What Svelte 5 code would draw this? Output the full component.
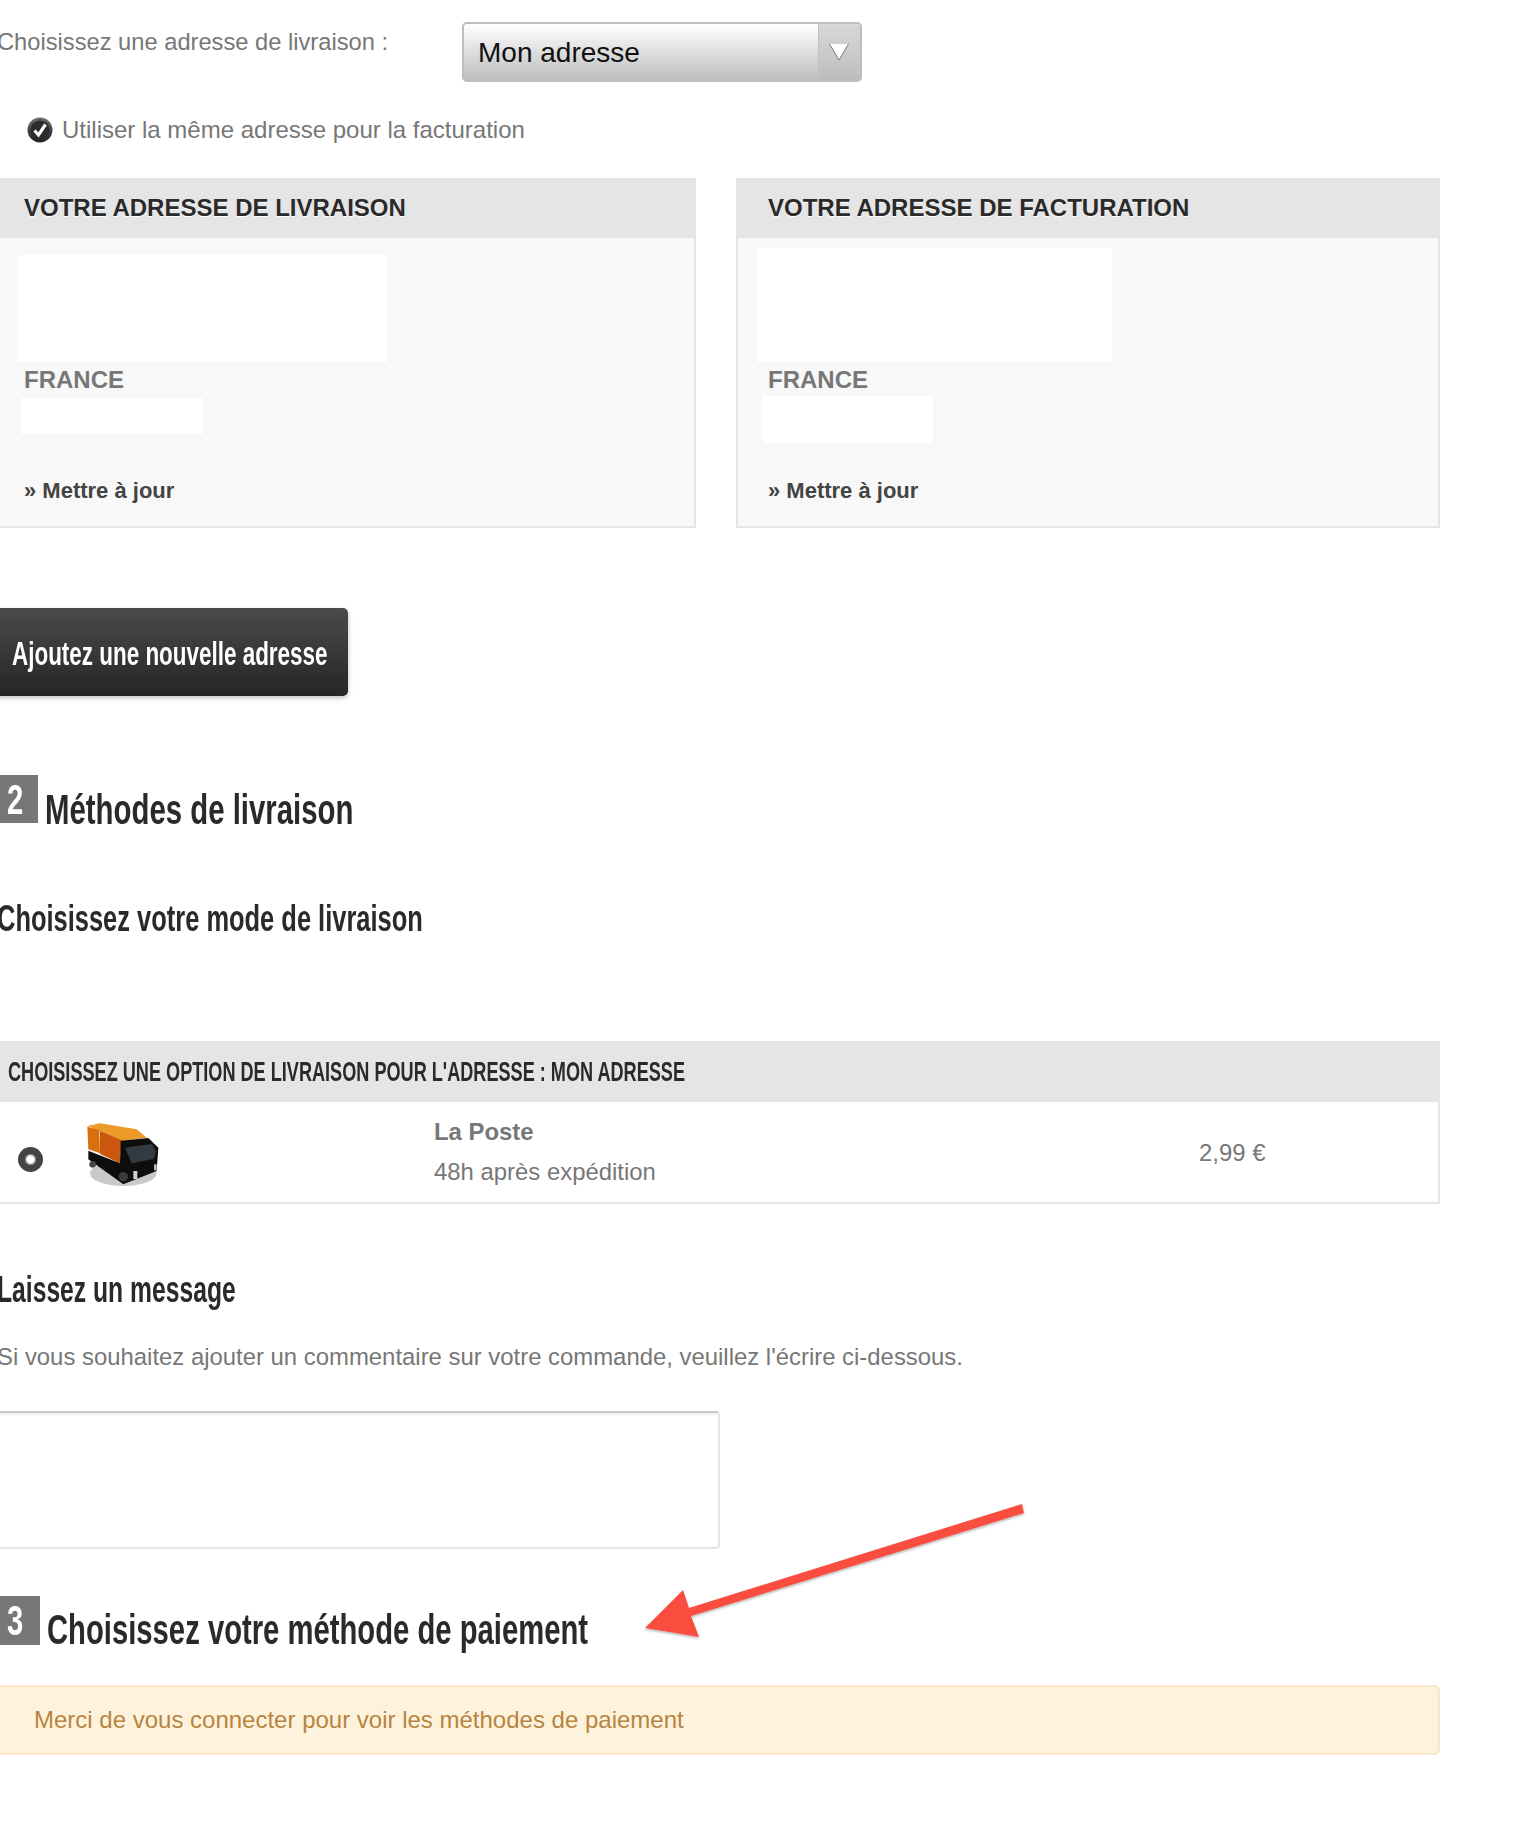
<script>
  const addresses = [
    { title: 'VOTRE ADRESSE DE LIVRAISON', cls: 'left' },
    { title: 'VOTRE ADRESSE DE FACTURATION', cls: 'right' }
  ];
</script>

<div class="page">
  <div class="choose">
    <span class="choose-label">Choisissez une adresse de livraison :</span>
    <div class="select">
      <span class="select-value">Mon adresse</span>
      <span class="select-arrow">
        <svg width="20" height="18" viewBox="0 0 20 18">
          <path d="M0.5 1 H19.5 L10 17 Z" fill="#fff" />
          <path d="M0.5 1 L10 17 L19.5 1" fill="none" stroke="#777" stroke-width="1" />
        </svg>
      </span>
    </div>
  </div>

  <div class="same">
    <svg width="26" height="26" viewBox="0 0 26 26">
      <defs>
        <linearGradient id="check-rim" x1="0" y1="0" x2="0" y2="1">
          <stop offset="0" stop-color="#6a6a6a" />
          <stop offset="1" stop-color="#222" />
        </linearGradient>
      </defs>
      <circle cx="13" cy="13" r="12.5" fill="url(#check-rim)" />
      <circle cx="13" cy="13" r="9.5" fill="#2c2c2c" />
      <path d="M7.5 13.5 L11.5 18 L18.5 7.5" fill="none" stroke="#fff" stroke-width="3.2" />
    </svg>
    <span>Utiliser la même adresse pour la facturation</span>
  </div>

  <div class="addresses">
    {#each addresses as a}
      <div class="address {a.cls}">
        <h3>{a.title}</h3>
        <div class="address-body">
          <div class="blank name"></div>
          <div class="country">FRANCE</div>
          <div class="blank phone"></div>
          <div class="update">» Mettre à jour</div>
        </div>
      </div>
    {/each}
  </div>

  <button class="add"><span class="narrow add-text">Ajoutez une nouvelle adresse</span></button>

  <h2 class="step first"><span class="num"><span class="narrow digit">2</span></span><span class="narrow step-title t2">Méthodes de livraison</span></h2>
  <h4 class="sub mode"><span class="narrow t-mode">Choisissez votre mode de livraison</span></h4>

  <div class="carrier">
    <div class="carrier-head"><span class="narrow t-head">CHOISISSEZ UNE OPTION DE LIVRAISON POUR L'ADRESSE : MON ADRESSE</span></div>
    <div class="carrier-row">
      <span class="radio"></span>
      <svg class="truck" width="85" height="75" viewBox="0 0 255 225">
        <g filter="url(#soft)">
          <ellipse cx="130" cy="172" rx="100" ry="38" fill="#888" opacity="0.45" />
          <path d="M22 30 L60 22 L170 40 L200 65 L125 75 L60 45 Z" fill="#ec9a2c" />
          <path d="M22 32 L58 42 L60 112 L25 100 Z" fill="#d87010" />
          <path d="M60 45 L124 72 L120 142 L60 114 Z" fill="#cb5608" />
          <path d="M122 74 L205 66 L235 95 L230 165 L130 205 L25 130 L25 104 L120 142 Z" fill="#111" />
          <path d="M135 95 L215 84 L228 105 L222 128 L155 142 Z" fill="#333b43" />
          <circle cx="38" cy="145" r="10" fill="#444" />
          <circle cx="130" cy="182" r="14" fill="#3a3a3a" />
          <rect x="160" y="165" width="12" height="24" fill="#cfcfcf" />
          <rect x="222" y="145" width="8" height="18" fill="#bbb" />
        </g>
      </svg>
      <div class="carrier-info">
        <strong>La Poste</strong>
        <span>48h après expédition</span>
      </div>
      <span class="price">2,99 €</span>
    </div>
  </div>

  <h4 class="sub message"><span class="narrow t-msg">Laissez un message</span></h4>
  <p class="hint">Si vous souhaitez ajouter un commentaire sur votre commande, veuillez l'écrire ci-dessous.</p>
  <div class="textarea"></div>

  <h2 class="step last"><span class="num wide"><span class="narrow digit">3</span></span><span class="narrow step-title t3">Choisissez votre méthode de paiement</span></h2>
  <div class="alert">Merci de vous connecter pour voir les méthodes de paiement</div>
</div>

<svg class="arrow" width="400" height="150" viewBox="640 1500 400 150">
  <defs>
    <filter id="arrow-shadow" x="-5%" y="-5%" width="110%" height="120%">
      <feDropShadow dx="0" dy="1.5" stdDeviation="1" flood-color="#000" flood-opacity="0.3" />
    </filter>
    <filter id="soft">
      <feGaussianBlur stdDeviation="2" />
    </filter>
  </defs>
  <path d="M1024 1513 L691 1616 L699 1637 L645 1628 L683 1590 L689 1608 L1022 1504 Z" fill="#f94e40" filter="url(#arrow-shadow)" />
</svg>

<style>
  :global(body) {
    background: #fff;
    overflow-x: hidden;
  }

  .page {
    position: relative;
    width: 1448px;
    height: 1821px;
    margin-left: -8px;
    font-family: "Liberation Sans", Arial, sans-serif;
    font-size: 23.9px;
    color: #777;
  }

  /* no Oswald here, so bold Liberation squeezed horizontally */
  .narrow {
    display: inline-block;
    white-space: nowrap;
    font-weight: bold;
    transform-origin: left center;
  }

  .choose {
    display: flex;
    padding: 22px 0 0 5px;
  }

  .choose-label {
    width: 465px;
    margin-top: 6px;
    font-size: 23.7px;
    line-height: 28px;
  }

  .select {
    display: flex;
    box-sizing: border-box;
    width: 400px;
    height: 60px;
    border: 2px solid #bdbdbd;
    border-radius: 5px;
    background: linear-gradient(#fff, #bdbdbd);
  }

  .select-value {
    flex: 1;
    padding-left: 14px;
    font-size: 28px;
    line-height: 58px;
    color: #111;
  }

  .select-arrow {
    display: flex;
    align-items: center;
    justify-content: center;
    box-sizing: border-box;
    width: 42px;
    padding-right: 2px;
    border-left: 1px solid #c0c0c0;
    background: linear-gradient(#d8d8d8, #bdbdbd);
  }

  .same {
    display: flex;
    align-items: center;
    gap: 9px;
    margin: 34px 0 0 35px;
    height: 28px;
    font-size: 24px;
  }

  .addresses {
    display: flex;
    gap: 40px;
    margin-top: 34px;
  }

  .address {
    box-sizing: border-box;
    width: 704px;
    height: 350px;
    border: 2px solid #e5e5e5;
    border-top: 0;
    background: #f8f8f8;
  }

  .address h3 {
    margin: 0 -2px;
    height: 60px;
    padding-left: 32px;
    background: #e5e5e5;
    font-size: 24px;
    line-height: 60px;
    color: #2a2a2a;
    text-shadow: 0 1px 0 #fff;
  }

  .address-body {
    padding-left: 30px;
  }

  .blank {
    background: #fff;
  }

  .left .name {
    width: 369px;
    height: 107px;
    margin: 17px 0 0 -6px;
  }

  .right .name {
    width: 355px;
    height: 114px;
    margin: 10px 0 0 -11px;
  }

  .country {
    margin-top: 3px;
    font-size: 24px;
    font-weight: bold;
    line-height: 30px;
  }

  .left .phone {
    width: 182px;
    height: 36px;
    margin: 3px 0 0 -3px;
  }

  .right .phone {
    width: 171px;
    height: 47px;
    margin: 1px 0 0 -6px;
  }

  .left .update {
    margin-top: 43px;
  }

  .right .update {
    margin-top: 34px;
  }

  .update {
    font-size: 22px;
    font-weight: bold;
    line-height: 28px;
    color: #444;
  }

  .add {
    display: block;
    width: 356px;
    height: 88px;
    margin-top: 80px;
    padding: 2px 0 0 20px;
    border: 0;
    border-radius: 5px;
    background: linear-gradient(#4b4b4b, #252525);
    box-shadow: 0 2px 5px rgba(0, 0, 0, 0.25);
    font-family: inherit;
    font-size: 34px;
    text-align: left;
    color: #fff;
  }

  .add-text {
    transform: scaleX(0.66);
  }

  .step {
    display: flex;
    margin: 0;
    padding-left: 8px;
    font-size: 43px;
    font-weight: normal;
    color: #2a2a2a;
  }

  .first {
    margin-top: 79px;
  }

  .last {
    margin-top: 47px;
  }

  .num {
    flex: none;
    box-sizing: border-box;
    width: 38px;
    height: 48px;
    padding-left: 7px;
    background: #777;
    color: #fff;
    line-height: 48px;
  }

  .num.wide {
    width: 40px;
    height: 49px;
  }

  .digit {
    transform: scaleX(0.68);
  }

  .step-title {
    margin: 10px 0 0 7px;
    line-height: 48px;
  }

  .last .step-title {
    margin-top: 9px;
  }

  .t2 {
    transform: scaleX(0.683);
  }

  .t3 {
    transform: scaleX(0.68);
  }

  .sub {
    margin: 0;
    padding-left: 5px;
    font-size: 37px;
    font-weight: normal;
    line-height: 40px;
    color: #2a2a2a;
  }

  .t-mode {
    transform: scaleX(0.688);
  }

  .t-msg {
    transform: scaleX(0.667);
  }

  .mode {
    margin-top: 66px;
  }

  .carrier {
    box-sizing: border-box;
    height: 163px;
    margin-top: 102px;
    border: 2px solid #e5e5e5;
    border-top: 0;
  }

  .carrier-head {
    margin: 0 -2px;
    height: 61px;
    padding-left: 16px;
    background: #e5e5e5;
    font-size: 28px;
    line-height: 61px;
    color: #2a2a2a;
  }

  .t-head {
    transform: scaleX(0.647);
  }

  .carrier-row {
    display: flex;
    align-items: center;
    height: 100px;
  }

  .radio {
    flex: none;
    box-sizing: border-box;
    width: 25px;
    height: 25px;
    margin: 15px 0 0 24px;
    border: 7px solid #444;
    border-radius: 50%;
    background: radial-gradient(#fff 30%, #bbb);
    box-shadow: 0 0 0 0 #000, inset 0 0 0 1px #888;
  }

  .truck {
    flex: none;
    margin: 2px 0 0 37px;
  }

  .carrier-info {
    display: flex;
    flex-direction: column;
    width: 765px;
    margin-left: 269px;
    line-height: 40px;
  }

  .price {
    margin-top: 2px;
  }

  .hint {
    margin: 33px 0 0;
    padding-left: 5px;
    line-height: 28px;
  }

  .message {
    margin-top: 66px;
  }

  .textarea {
    box-sizing: border-box;
    width: 728px;
    height: 138px;
    margin-top: 40px;
    border: 2px solid #e5e5e5;
    border-top-color: #c8c8c8;
    border-radius: 4px;
    box-shadow: inset 0 2px 2px rgba(0, 0, 0, 0.06);
  }

  .alert {
    box-sizing: border-box;
    height: 70px;
    margin-top: 32px;
    padding-left: 40px;
    border: 2px solid #fbe6c8;
    border-radius: 5px;
    background: #fdf3dc;
    font-size: 24px;
    line-height: 66px;
    color: #b8843f;
  }

  .arrow {
    position: absolute;
    left: 640px;
    top: 1500px;
  }
</style>
